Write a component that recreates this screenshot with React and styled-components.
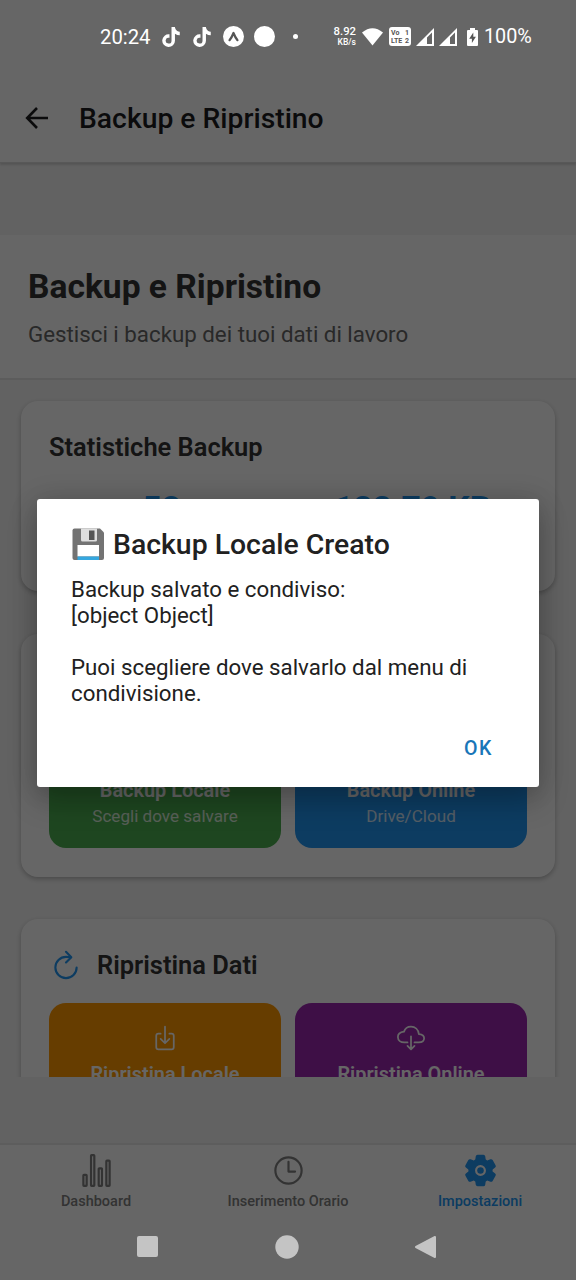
import React from 'react';
import styled, { createGlobalStyle } from 'styled-components';
import { FaTiktok } from 'react-icons/fa6';
import {
  IoRefreshOutline,
  IoDownloadOutline,
  IoCloudDownloadOutline,
  IoStatsChartOutline,
  IoTimeOutline,
  IoSettings,
} from 'react-icons/io5';

const GlobalStyle = createGlobalStyle`
  * { box-sizing: border-box; }
  body { margin: 0; font-family: Roboto, sans-serif; color: #333; }
  h1, h2, h3, p { margin: 0; }
  button { font-family: inherit; border: 0; padding: 0; background: none; }
  svg { display: block; flex: none; }
`;

const Screen = styled.div`
  position: relative;
  width: 576px;
  height: 1280px;
  overflow: hidden;
  display: flex;
  flex-direction: column;
  background: #fff;
`;

const StatusBar = styled.div`
  position: relative;
  z-index: 2;
  height: 73px;
  flex: none;
  display: flex;
  align-items: center;
  padding-left: 100px;
  color: #fff;
  font-size: 20.3px;
  line-height: 24px;
`;

const StatusItem = styled.div`
  flex: none;
  width: ${(p) => p.$w}px;
  margin-left: ${(p) => p.$gap || 0}px;
  display: flex;
  justify-content: flex-start;
  white-space: nowrap;
`;

const BatteryLevel = styled(StatusItem)`
  font-size: 19.8px;
`;

const NetSpeed = styled(StatusItem)`
  flex-direction: column;
  align-items: flex-end;
  font-size: 11.3px;
  line-height: 12px;
  font-weight: 500;
  small { font-size: 8.5px; line-height: 9px; }
`;

const LteBadge = styled(StatusItem)`
  flex-direction: column;
  height: 19px;
  padding: 2px 2px 0;
  border-radius: 3px;
  background: #fff;
  color: #555;
  font-size: 7px;
  line-height: 8px;
  font-weight: 700;
`;

const LteLine = styled.div`
  display: flex;
  justify-content: space-between;
`;

const Header = styled.header`
  flex: none;
  height: 90px;
  display: flex;
  align-items: center;
  gap: 28px;
  padding-left: 23px;
  border-bottom: 1px solid #dcdcdc;
  box-shadow: 0 2px 2px rgba(0, 0, 0, 0.14);
  position: relative;
  color: #1c1c1e;
  h1 { padding-top: 2px; font-size: 28.3px; line-height: 34px; font-weight: 500; }
`;

const Content = styled.main`
  flex: none;
  height: 914px;
  padding-top: 72px;
  overflow: hidden;
  background: #f5f5f5;
`;

const Intro = styled.section`
  height: 145px;
  padding: 31px 28px 0;
  background: #fff;
  border-bottom: 2px solid #e5e5e5;
  h2 { font-size: 33.6px; line-height: 42px; font-weight: 700; }
  p { margin-top: 11px; font-size: 22.3px; line-height: 30px; color: #666; }
`;

const Card = styled.section`
  height: ${(p) => p.$h}px;
  margin: ${(p) => p.$top}px 21px 0;
  padding: 28px;
  border-radius: 17px;
  background: #fff;
  box-shadow: 0 2px 5px rgba(0, 0, 0, 0.25);
`;

const CardHead = styled.div`
  display: flex;
  align-items: center;
  gap: 14px;
  height: 36px;
  color: #2196f3;
  h3 { font-size: 25.45px; line-height: 34px; font-weight: 600; color: #333; }
`;

const Stats = styled.div`
  display: flex;
  gap: 20px;
  margin: 24px -1px 0 -3px;
`;

const StatValue = styled.div`
  flex: 1;
  text-align: center;
  font-size: 33.6px;
  line-height: 40px;
  font-weight: 700;
  color: #2196f3;
`;

const Actions = styled.div`
  display: flex;
  gap: 14px;
  margin-top: ${(p) => p.$top}px;
`;

const ActionButton = styled.button`
  flex: 1;
  height: 129px;
  display: flex;
  flex-direction: column;
  align-items: center;
  padding-top: 21px;
  border-radius: 17px;
  background: ${(p) => p.$color};
  color: #fff;
  strong { margin-top: 9px; font-size: 19.9px; line-height: 27px; font-weight: 600; }
  span { font-size: 17.1px; line-height: 24px; opacity: 0.8; }
`;

const Gap = styled.div`
  flex: none;
  height: 66px;
  background: #f5f5f5;
`;

const TabBar = styled.nav`
  flex: none;
  height: 70px;
  display: flex;
  border-top: 2px solid #e8e8e8;
  background: #fff;
`;

const Tab = styled.div`
  flex: 1;
  display: flex;
  flex-direction: column;
  align-items: center;
  padding-top: 8px;
  font-size: 14.5px;
  line-height: 18px;
  font-weight: 500;
  color: ${(p) => (p.$active ? '#2196f3' : '#808080')};
  span { margin-top: 5px; }
`;

const SystemNav = styled.div`
  position: relative;
  z-index: 2;
  flex: 1;
  display: flex;
  align-items: center;
  padding-left: 136px;
  gap: 115.5px;
`;

const Scrim = styled.div`
  position: absolute;
  inset: 0;
  z-index: 1;
  display: flex;
  padding-top: 499px;
  justify-content: center;
  align-items: flex-start;
  background: rgba(0, 0, 0, 0.6);
`;

const Dialog = styled.div`
  width: 502px;
  height: 288px;
  padding: 25px 34px 0;
  border-radius: 3px;
  background: #fff;
  color: #212121;
  box-shadow: 0 14px 30px rgba(0, 0, 0, 0.22), 0 0 28px rgba(0, 0, 0, 0.14);
  p { margin-top: 12px; font-size: 22.3px; line-height: 26px; white-space: pre-line; }
`;

const DialogTitle = styled.h2`
  display: flex;
  align-items: center;
  gap: 8px;
  height: 40px;
  font-size: 28.4px;
  font-weight: 500;
`;

const DialogActions = styled.div`
  display: flex;
  justify-content: flex-end;
  margin-top: 30px;
  padding-right: 12px;
  button { font-size: 19.6px; line-height: 26px; font-weight: 500; letter-spacing: 1.6px; color: #1976b8; }
`;

const Floppy = () => (
  <svg width="34" height="34" viewBox="0 0 34 34">
    <path d="M3.5 1.5H29l4 4V31q0 2-2 2H3.5q-2 0-2-2V3.5q0-2 2-2z" fill="#737373" />
    <path d="M10 1.5h16V13q0 1.500-1.500 1.500h-13Q10 14.500 10 13z" fill="#dedede" />
    <path d="M18 3.5h5.500v9.500H18z" fill="#555" />
    <path d="M6.500 18h21.500v11.500H6.500z" fill="#fff" />
    <path d="M6.500 29.500h21.500V33H6.500z" fill="#35a7df" />
  </svg>
);

const Signal = () => (
  <svg width="18" height="18" viewBox="0 0 18 18">
    <path fillRule="evenodd" fill="#fff" d="M0 18L18 0v18zM11 9.5V16h5V4.5z" />
  </svg>
);

export default function App() {
  return (
    <>
      <GlobalStyle />
      <Screen>
        <StatusBar>
          <StatusItem $w={51}>20:24</StatusItem>
          <StatusItem $w={20} $gap={10}><FaTiktok size={20} /></StatusItem>
          <StatusItem $w={20} $gap={11}><FaTiktok size={20} /></StatusItem>
          <StatusItem $w={21} $gap={11}>
            <svg width="21" height="21" viewBox="0 0 21 21">
              <circle cx="10.5" cy="10.5" r="10.5" fill="#fff" />
              <path d="M6.5 14.2Q8.8 11.5 10.5 7q1.7 4.5 4 7.2" fill="none" stroke="#555" strokeWidth="2.2" strokeLinecap="round" strokeLinejoin="round" />
            </svg>
          </StatusItem>
          <StatusItem $w={21} $gap={10}>
            <svg width="21" height="21"><circle cx="10.5" cy="10.5" r="10.5" fill="#fff" /></svg>
          </StatusItem>
          <StatusItem $w={5} $gap={18}>
            <svg width="5" height="5"><circle cx="2.5" cy="2.5" r="2.5" fill="#fff" /></svg>
          </StatusItem>
          <NetSpeed $w={24} $gap={34}>8.92<small>KB/s</small></NetSpeed>
          <StatusItem $w={21} $gap={6}>
            <svg width="21" height="18" viewBox="0 0 21 18"><path fill="#fff" d="M0 4.5Q10.5-4 21 4.5L10.5 17.5z" /></svg>
          </StatusItem>
          <LteBadge $w={22} $gap={6}>
            <LteLine><span>Vo</span><span>1</span></LteLine>
            <LteLine><span>LTE</span><span>2</span></LteLine>
          </LteBadge>
          <StatusItem $w={18} $gap={5}><Signal /></StatusItem>
          <StatusItem $w={18} $gap={5}><Signal /></StatusItem>
          <StatusItem $w={11} $gap={10}>
            <svg width="11" height="18" viewBox="0 0 11 18">
              <path fill="#fff" d="M3 0h5v2h2q1 0 1 1v14q0 1-1 1H1q-1 0-1-1V3q0-1 1-1h2z" />
              <path fill="#555" d="M6.3 4.5L2.2 10.8h2.7V15l4-6.3H6.3z" />
            </svg>
          </StatusItem>
          <BatteryLevel $w={50} $gap={6}>100%</BatteryLevel>
        </StatusBar>

        <Header>
          <svg width="28" height="28" viewBox="0 0 28 28" fill="none" stroke="currentColor" strokeWidth="2.6">
            <path d="M25 14H5M14 4L4.200 14 14 24" />
          </svg>
          <h1>Backup e Ripristino</h1>
        </Header>

        <Content>
          <Intro>
            <h2>Backup e Ripristino</h2>
            <p>Gestisci i backup dei tuoi dati di lavoro</p>
          </Intro>
          <Card $h={190} $top={21}>
            <CardHead><h3>Statistiche Backup</h3></CardHead>
            <Stats>
              <StatValue>58</StatValue>
              <StatValue>122.79 KB</StatValue>
            </Stats>
          </Card>
          <Card $h={243} $top={43}>
            <Actions $top={57}>
              <ActionButton $color="#4caf50">
                <IoDownloadOutline size={28} />
                <strong>Backup Locale</strong>
                <span>Scegli dove salvare</span>
              </ActionButton>
              <ActionButton $color="#2196f3">
                <IoCloudDownloadOutline size={28} />
                <strong>Backup Online</strong>
                <span>Drive/Cloud</span>
              </ActionButton>
            </Actions>
          </Card>
          <Card $h={243} $top={42}>
            <CardHead>
              <IoRefreshOutline size={34} />
              <h3>Ripristina Dati</h3>
            </CardHead>
            <Actions $top={20}>
              <ActionButton $color="#ff9800">
                <IoDownloadOutline size={28} />
                <strong>Ripristina Locale</strong>
              </ActionButton>
              <ActionButton $color="#9c27b0">
                <IoCloudDownloadOutline size={28} />
                <strong>Ripristina Online</strong>
              </ActionButton>
            </Actions>
          </Card>
        </Content>
        <Gap />

        <TabBar>
          <Tab><IoStatsChartOutline size={35} /><span>Dashboard</span></Tab>
          <Tab><IoTimeOutline size={35} /><span>Inserimento Orario</span></Tab>
          <Tab $active><IoSettings size={35} /><span>Impostazioni</span></Tab>
        </TabBar>

        <SystemNav>
          <svg width="23" height="23"><rect x="1" y="1" width="21" height="21" rx="2" fill="#c4c4c4" /></svg>
          <svg width="24" height="24"><circle cx="12" cy="12" r="11.7" fill="#c4c4c4" /></svg>
          <svg width="24" height="24" viewBox="0 0 24 24"><path d="M2 12L21 2v20z" fill="#c4c4c4" stroke="#c4c4c4" strokeWidth="2" strokeLinejoin="round" /></svg>
        </SystemNav>

        <Scrim>
          <Dialog>
            <DialogTitle><Floppy />Backup Locale Creato</DialogTitle>
            <p>{'Backup salvato e condiviso:\n[object Object]\n\nPuoi scegliere dove salvarlo dal menu di condivisione.'}</p>
            <DialogActions><button>OK</button></DialogActions>
          </Dialog>
        </Scrim>
      </Screen>
    </>
  );
}
